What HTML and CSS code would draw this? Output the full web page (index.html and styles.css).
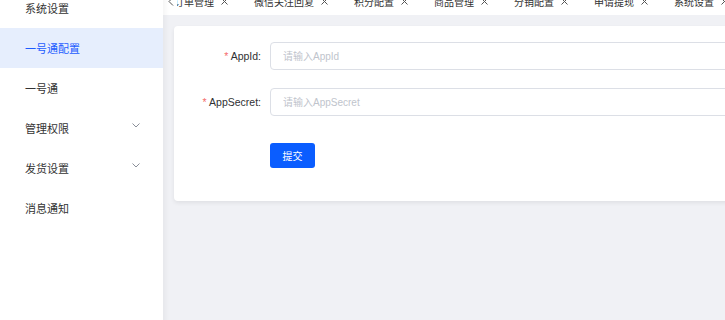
FILE: index.html
```html
<!DOCTYPE html>
<html lang="zh">
<head>
<meta charset="utf-8">
<title>一号通配置</title>
<link rel="stylesheet" href="styles.css">
</head>
<body>
<div class="app">
  <aside class="sidebar">
    <div class="menu-item">系统设置</div>
    <div class="menu-item active">一号通配置</div>
    <div class="menu-item">一号通</div>
    <div class="menu-item has-sub">管理权限<svg class="chev" width="8" height="5" viewBox="0 0 8 5"><path d="M0.5 0.5 L4 4 L7.5 0.5" fill="none" stroke="#8a8f99" stroke-width="1"/></svg></div>
    <div class="menu-item has-sub">发货设置<svg class="chev" width="8" height="5" viewBox="0 0 8 5"><path d="M0.5 0.5 L4 4 L7.5 0.5" fill="none" stroke="#8a8f99" stroke-width="1"/></svg></div>
    <div class="menu-item">消息通知</div>
  </aside>
  <div class="main">
    <div class="tabs">
      <div class="tab-arrow"><svg width="6" height="9" viewBox="0 0 6 9"><path d="M5 0.5 L1 4.5 L5 8.5" fill="none" stroke="#555" stroke-width="1"/></svg></div>
      <div class="tab-list">
        <div class="tab">订单管理<svg class="close" width="7" height="7" viewBox="0 0 7 7"><path d="M0.5 0.5 L6.5 6.5 M6.5 0.5 L0.5 6.5" stroke="#555" stroke-width="1"/></svg></div>
        <div class="tab">微信关注回复<svg class="close" width="7" height="7" viewBox="0 0 7 7"><path d="M0.5 0.5 L6.5 6.5 M6.5 0.5 L0.5 6.5" stroke="#555" stroke-width="1"/></svg></div>
        <div class="tab">积分配置<svg class="close" width="7" height="7" viewBox="0 0 7 7"><path d="M0.5 0.5 L6.5 6.5 M6.5 0.5 L0.5 6.5" stroke="#555" stroke-width="1"/></svg></div>
        <div class="tab">商品管理<svg class="close" width="7" height="7" viewBox="0 0 7 7"><path d="M0.5 0.5 L6.5 6.5 M6.5 0.5 L0.5 6.5" stroke="#555" stroke-width="1"/></svg></div>
        <div class="tab">分销配置<svg class="close" width="7" height="7" viewBox="0 0 7 7"><path d="M0.5 0.5 L6.5 6.5 M6.5 0.5 L0.5 6.5" stroke="#555" stroke-width="1"/></svg></div>
        <div class="tab">申请提现<svg class="close" width="7" height="7" viewBox="0 0 7 7"><path d="M0.5 0.5 L6.5 6.5 M6.5 0.5 L0.5 6.5" stroke="#555" stroke-width="1"/></svg></div>
        <div class="tab">系统设置<svg class="close" width="7" height="7" viewBox="0 0 7 7"><path d="M0.5 0.5 L6.5 6.5 M6.5 0.5 L0.5 6.5" stroke="#555" stroke-width="1"/></svg></div>
      </div>
    </div>
    <div class="content">
      <div class="card">
        <div class="form-row">
          <label class="form-label"><span class="req">*</span> AppId:</label>
          <input class="form-input" type="text" placeholder="请输入AppId">
        </div>
        <div class="form-row">
          <label class="form-label"><span class="req">*</span> AppSecret:</label>
          <input class="form-input" type="text" placeholder="请输入AppSecret">
        </div>
        <div class="form-actions">
          <button class="btn-primary" type="button">提交</button>
        </div>
      </div>
    </div>
  </div>
</div>
</body>
</html>
```

FILE: styles.css
```css
* { box-sizing: border-box; }
html, body { margin: 0; padding: 0; overflow: hidden; }
body {
  font-family: "Liberation Sans", "Noto Sans CJK SC", sans-serif;
  color: #303133;
  background: #f0f1f5;
}
.app {
  display: flex;
  margin-top: -12px;
  height: 340px;
}
.sidebar {
  width: 163px;
  flex: none;
  background: #fff;
  box-shadow: 2px 0 6px rgba(0, 0, 0, 0.05);
  position: relative;
  z-index: 2;
}
.menu-item {
  height: 40px;
  display: flex;
  align-items: center;
  padding-left: 25px;
  font-size: 11px;
  color: #333;
  position: relative;
}
.menu-item.active {
  background: #e6eefd;
  color: #1d5cff;
}
.chev {
  position: absolute;
  left: 132px;
  top: 15px;
}
.main {
  flex: 1;
  min-width: 0;
  display: flex;
  flex-direction: column;
  overflow: hidden;
}
.tabs {
  height: 27px;
  background: #fff;
  position: relative;
  display: flex;
  align-items: center;
  flex: none;
}
.tab-arrow {
  position: absolute;
  left: 0;
  top: 0;
  width: 14px;
  height: 100%;
  background: #fff;
  display: flex;
  align-items: center;
  justify-content: center;
  padding-left: 2px;
  z-index: 1;
}
.tab-list {
  display: flex;
  white-space: nowrap;
  margin-left: -2px;
}
.tab {
  display: flex;
  align-items: center;
  padding: 0 13px;
  font-size: 10px;
  color: #333;
  flex: none;
}
.close {
  margin-left: 7px;
  flex: none;
}
.content {
  flex: 1;
  padding: 11px 0 0 11px;
}
.card {
  width: 720px;
  background: #fff;
  border-radius: 4px;
  box-shadow: 0 2px 4px rgba(0, 0, 0, 0.07);
  padding: 16px 0 33px;
}
.form-row {
  display: flex;
  align-items: center;
  margin-bottom: 18px;
}
.form-label {
  width: 96px;
  padding-right: 9px;
  text-align: right;
  font-size: 10.5px;
  color: #303133;
}
.req {
  color: #f56c6c;
}
.form-input {
  width: 560px;
  height: 28px;
  border: 1px solid #dcdfe6;
  border-radius: 4px;
  padding: 0 12px;
  font-size: 10px;
  font-family: "Liberation Sans", "Noto Sans CJK SC", sans-serif;
  outline: none;
}
.form-input::placeholder {
  color: #c0c4cc;
}
.form-actions {
  padding-left: 96px;
  padding-top: 9px;
}
.btn-primary {
  width: 45px;
  height: 25px;
  border: none;
  border-radius: 3px;
  background: #0a5dff;
  color: #fff;
  font-size: 10px;
  font-family: "Liberation Sans", "Noto Sans CJK SC", sans-serif;
  padding: 0;
}
```
